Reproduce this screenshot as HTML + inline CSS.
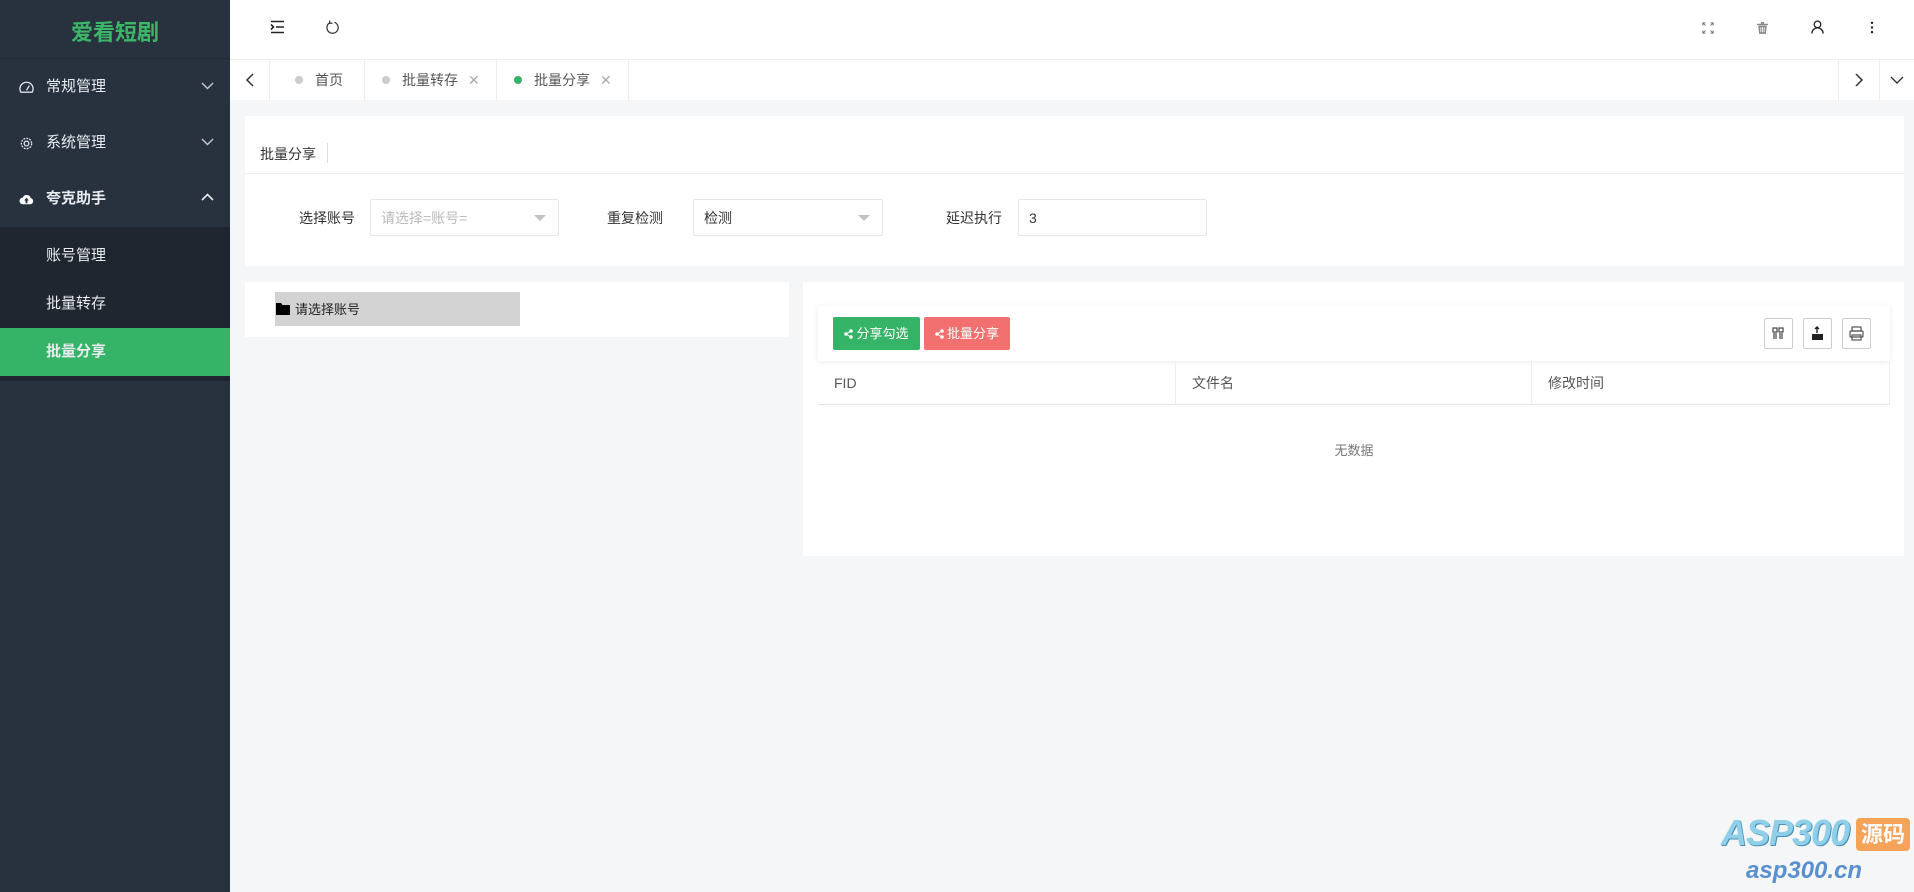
<!DOCTYPE html>
<html><head><meta charset="utf-8">
<style>
*{box-sizing:border-box;margin:0;padding:0}
body{width:1914px;height:892px;overflow:hidden;background:#f4f6f8;font-family:"Liberation Sans","Noto Sans CJK SC",sans-serif;position:relative;color:#333}
.abs{position:absolute}
#side{left:0;top:0;width:230px;height:892px;background:#28323f}
.logo{left:0;top:0;width:230px;height:59px;line-height:66px;text-align:center;color:#3cb767;font-size:22px;font-weight:bold;border-bottom:1px solid #222a35}
.mi{left:0;width:230px;height:56px;color:#e8ebef;font-size:15px;line-height:56px;padding-left:46px}
.mi .ic{position:absolute;left:19px;top:21px;width:15px;height:15px}
.mi .ar{position:absolute;right:16px;top:22px}
.sub{left:0;top:227px;width:230px;height:154px;background:#1f262f}
.si{left:0;width:230px;height:48px;line-height:48px;padding-left:46px;color:#e8ebef;font-size:15px}
#head{left:230px;top:0;width:1684px;height:59px;background:#fff}
#tabs{left:230px;top:59px;width:1684px;height:41px;background:#fff;border-top:1px solid #eee}
.tab{top:0;height:41px;line-height:40px;border-right:1px solid #eee;font-size:14px;color:#555}
.dot{display:inline-block;width:8px;height:8px;border-radius:50%;background:#ccc;margin-right:12px;vertical-align:1px}
.x{color:#aaa;margin-left:10px;font-size:14px}
.card{background:#fff}
.lbl{font-size:14px;color:#333}
.sel{border:1px solid #e6e6e6;background:#fff;font-size:14px;line-height:36px;padding-left:10px;border-radius:2px}
.tri{position:absolute;right:12px;top:15px;border-left:6px solid transparent;border-right:6px solid transparent;border-top:6px solid #c2c2c2}
.btn{height:33px;line-height:33px;color:#fff;font-size:13px;text-align:center;border-radius:2px}
.btn svg{vertical-align:-1px;margin-right:3px}
.ib{width:29px;height:31px;border:1px solid #ccc;border-radius:2px;background:#fff}
.th{top:361px;height:44px;line-height:44px;font-size:14px;color:#555;padding-left:16px;border-right:1px solid #eee;border-bottom:1px solid #e6e6e6}
</style></head><body>
<div id="side" class="abs">
 <div class="abs logo">爱看短剧</div>
 <div class="abs mi" style="top:59px">
  <svg class="ic" viewBox="0 0 16 16" fill="none" stroke="#dfe3e8" stroke-width="1.4"><path d="M2 13A7 7 0 1 1 14 13Z"/><path d="M8 11L11 6"/></svg>常规管理<svg class="ar" width="13" height="9" viewBox="0 0 13 9" fill="none" stroke="#c8ccd2" stroke-width="1.4"><path d="M1 2L6.5 7.5L12 2"/></svg></div>
 <div class="abs mi" style="top:115px">
  <svg class="ic" viewBox="0 0 16 16" fill="none" stroke="#dfe3e8" stroke-width="1.4"><circle cx="8" cy="8" r="5.5" stroke-dasharray="2 1.2"/><circle cx="8" cy="8" r="2.5"/></svg>系统管理<svg class="ar" width="13" height="9" viewBox="0 0 13 9" fill="none" stroke="#c8ccd2" stroke-width="1.4"><path d="M1 2L6.5 7.5L12 2"/></svg></div>
 <div class="abs mi" style="top:171px;font-weight:bold">
  <svg class="ic" viewBox="0 0 16 16"><path fill="#fff" d="M4 13A3.5 3.5 0 0 1 4 6A4.5 4.5 0 0 1 12.5 6.5A3.3 3.3 0 0 1 12 13Z"/><path fill="#28323f" d="M8 6L5.5 9H7V12H9V9H10.5Z"/></svg>夸克助手<svg class="ar" width="13" height="9" viewBox="0 0 13 9" fill="none" stroke="#e8ebef" stroke-width="1.6"><path d="M1 7L6.5 1.5L12 7"/></svg></div>
 <div class="abs sub"></div>
 <div class="abs si" style="top:232px">账号管理</div>
 <div class="abs si" style="top:280px">批量转存</div>
 <div class="abs si" style="top:328px;background:#35b366;font-weight:bold">批量分享</div>
</div>
<div id="head" class="abs">
 <svg class="abs" style="left:40px;top:20px" width="15" height="14" viewBox="0 0 15 14" stroke="#222" stroke-width="1.6"><path d="M1 1.5H14M6 7H14M1 12.5H14M1 4.5L3.5 7L1 9.5" fill="none"/></svg>
 <svg class="abs" style="left:95px;top:20px" width="15" height="15" viewBox="0 0 16 16" fill="none" stroke="#333" stroke-width="1.3"><path d="M10 2.5A6 6 0 1 1 5 3"/><path d="M5 0.5V3.5H8"/></svg>
 <svg class="abs" style="left:1472px;top:22px" width="12" height="12" viewBox="0 0 14 14" fill="none" stroke="#777" stroke-width="1.2"><path d="M1 4V1H4M10 1H13V4M13 10V13H10M4 13H1V10M1 1L4 4M13 1L10 4M13 13L10 10M1 13L4 10"/></svg>
 <svg class="abs" style="left:1527px;top:22px" width="11" height="12" viewBox="0 0 13 14" fill="#888"><rect x="0" y="2" width="13" height="1.5"/><rect x="4.5" y="0" width="4" height="2"/><path d="M1.5 4H11.5L10.5 14H2.5Z"/><rect x="4" y="6" width="1" height="6" fill="#fff"/><rect x="6" y="6" width="1" height="6" fill="#fff"/><rect x="8" y="6" width="1" height="6" fill="#fff"/></svg>
 <svg class="abs" style="left:1581px;top:20px" width="13" height="14" viewBox="0 0 15 16" fill="none" stroke="#222" stroke-width="1.5"><circle cx="7.5" cy="5" r="3.8"/><path d="M1 15.5A6.5 6.5 0 0 1 14 15.5"/></svg>
 <svg class="abs" style="left:1640px;top:21px" width="4" height="13" viewBox="0 0 4 14" fill="#222"><circle cx="2" cy="2" r="1.3"/><circle cx="2" cy="7" r="1.3"/><circle cx="2" cy="12" r="1.3"/></svg>
</div>
<div id="tabs" class="abs">
 <div class="abs tab" style="left:0;width:40px;text-align:center"><svg width="10" height="14" viewBox="0 0 10 14" style="vertical-align:-2px" fill="none" stroke="#333" stroke-width="1.5"><path d="M8 1L2 7L8 13"/></svg></div>
 <div class="abs tab" style="left:40px;width:95px;padding-left:25px"><span class="dot"></span>首页</div>
 <div class="abs tab" style="left:135px;width:132px;padding-left:17px"><span class="dot"></span>批量转存<span class="x">✕</span></div>
 <div class="abs tab" style="left:267px;width:132px;padding-left:17px"><span class="dot" style="background:#35b366"></span>批量分享<span class="x">✕</span></div>
 <div class="abs tab" style="left:1608px;width:42px;border-left:1px solid #eee;text-align:center"><svg width="10" height="14" viewBox="0 0 10 14" style="vertical-align:-2px" fill="none" stroke="#333" stroke-width="1.5"><path d="M2 1L8 7L2 13"/></svg></div>
 <div class="abs tab" style="left:1650px;width:34px;border:none;text-align:center"><svg width="14" height="9" viewBox="0 0 14 9" fill="none" stroke="#333" stroke-width="1.4"><path d="M1 1L7 7L13 1"/></svg></div>
</div>
<div class="abs card" style="left:245px;top:116px;width:1659px;height:150px">
 <div class="abs" style="left:0;top:0;width:1659px;height:58px;border-bottom:1px solid #f0f0f0"></div>
 <div class="abs lbl" style="left:15px;top:28px">批量分享</div>
 <div class="abs" style="left:82px;top:27px;width:1px;height:20px;background:#ddd"></div>
 <div class="abs lbl" style="left:54px;top:92px">选择账号</div>
 <div class="abs sel" style="left:125px;top:83px;width:189px;height:37px;color:#bbb">请选择=账号=<span class="tri"></span></div>
 <div class="abs lbl" style="left:362px;top:92px">重复检测</div>
 <div class="abs sel" style="left:448px;top:83px;width:190px;height:37px">检测<span class="tri"></span></div>
 <div class="abs lbl" style="left:701px;top:92px">延迟执行</div>
 <div class="abs sel" style="left:773px;top:83px;width:189px;height:37px">3</div>
</div>
<div class="abs card" style="left:245px;top:282px;width:544px;height:55px">
 <div class="abs" style="left:30px;top:10px;width:245px;height:34px;background:#d3d3d3;font-size:13px;line-height:36px;color:#222;padding-left:20px">请选择账号</div>
 <svg class="abs" style="left:31px;top:21px" width="14" height="12" viewBox="0 0 14 12" fill="#000"><path d="M0 0H5L6.5 2H14V12H0Z"/></svg>
</div>
<div class="abs card" style="left:803px;top:282px;width:1101px;height:274px"></div>
<div class="abs" style="left:818px;top:306px;width:1072px;height:55px;background:#fff;box-shadow:0 1px 6px rgba(0,0,0,.08)"></div>
<div class="abs btn" style="left:833px;top:317px;width:87px;background:#35b366"><svg width="9" height="10" viewBox="0 0 9 10" fill="#fff"><circle cx="7" cy="2" r="1.8"/><circle cx="2" cy="5" r="1.8"/><circle cx="7" cy="8" r="1.8"/><path d="M2 5L7 2M2 5L7 8" stroke="#fff" stroke-width="1"/></svg>分享勾选</div>
<div class="abs btn" style="left:924px;top:317px;width:86px;background:#f27070"><svg width="9" height="10" viewBox="0 0 9 10" fill="#fff"><circle cx="7" cy="2" r="1.8"/><circle cx="2" cy="5" r="1.8"/><circle cx="7" cy="8" r="1.8"/><path d="M2 5L7 2M2 5L7 8" stroke="#fff" stroke-width="1"/></svg>批量分享</div>
<div class="abs ib" style="left:1764px;top:318px"><svg width="27" height="29" viewBox="0 0 27 29" fill="none" stroke="#444" stroke-width="1.2"><rect x="8" y="9" width="4" height="4"/><rect x="14" y="9" width="4" height="4"/><path d="M9 14V20M11 14V20M15 14V20M17 14V20"/></svg></div>
<div class="abs ib" style="left:1803px;top:318px"><svg width="27" height="29" viewBox="0 0 27 29"><path d="M8 15H19V21H8Z" fill="#222"/><path d="M13 14V8M11 10L13 8L15 10" stroke="#222" stroke-width="1.4" fill="none"/></svg></div>
<div class="abs ib" style="left:1842px;top:318px"><svg width="27" height="29" viewBox="0 0 27 29" fill="none" stroke="#555" stroke-width="1.2"><rect x="9" y="8" width="9" height="4"/><rect x="7" y="12" width="13" height="6" rx="1"/><rect x="9" y="16" width="9" height="5"/></svg></div>
<div class="abs th" style="left:818px;width:358px">FID</div>
<div class="abs th" style="left:1176px;width:356px">文件名</div>
<div class="abs th" style="left:1532px;width:358px">修改时间</div>
<div class="abs" style="left:818px;top:440px;width:1072px;text-align:center;font-size:13px;color:#777">无数据</div>
<div class="abs" style="left:1721px;top:812px;font-size:36px;font-weight:bold;font-style:italic;color:#8fcfe8;letter-spacing:-1px;text-shadow:1px 1px 0 #4a8fb8">ASP300</div>
<div class="abs" style="left:1856px;top:818px;width:54px;height:33px;background:#f6a35a;border-radius:4px;color:#fff;font-size:22px;font-weight:bold;line-height:33px;text-align:center">源码</div>
<div class="abs" style="left:1746px;top:857px;font-size:24px;font-weight:bold;font-style:italic;color:#5a8fd0">asp300.cn</div>
</body></html>
